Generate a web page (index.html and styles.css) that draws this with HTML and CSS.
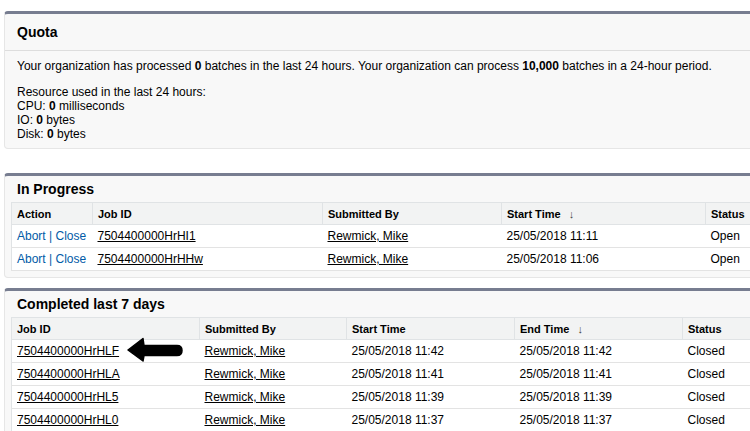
FILE: index.html
```html
<!DOCTYPE html>
<html>
<head>
<meta charset="utf-8">
<link rel="stylesheet" href="styles.css">
</head>
<body>
<div class="page">
  <section class="panel quota">
    <div class="quota-title"><h2>Quota</h2></div>
    <div class="quota-body">
      <p class="first">Your organization has processed <b>0</b> batches in the last 24 hours. Your organization can process <b>10,000</b> batches in a 24-hour period.</p>
      <p>Resource used in the last 24 hours:<br>CPU: <b>0</b> milliseconds<br>IO: <b>0</b> bytes<br>Disk: <b>0</b> bytes</p>
    </div>
  </section>

  <section class="panel progress">
    <div class="title"><h2>In Progress</h2></div>
    <table class="list">
      <colgroup><col style="width:81px"><col style="width:230px"><col style="width:179px"><col style="width:204px"><col style="width:80px"></colgroup>
      <tr class="head"><th>Action</th><th>Job ID</th><th>Submitted By</th><th>Start Time <span class="sort">&#8595;</span></th><th>Status</th></tr>
      <tr><td><a class="act">Abort</a> <span class="sep">|</span> <a class="act">Close</a></td><td><a class="u">7504400000HrHI1</a></td><td><a class="u">Rewmick, Mike</a></td><td>25/05/2018 11:11</td><td>Open</td></tr>
      <tr><td><a class="act">Abort</a> <span class="sep">|</span> <a class="act">Close</a></td><td><a class="u">7504400000HrHHw</a></td><td><a class="u">Rewmick, Mike</a></td><td>25/05/2018 11:06</td><td>Open</td></tr>
    </table>
  </section>

  <section class="panel completed">
    <div class="title"><h2>Completed last 7 days</h2></div>
    <table class="list">
      <colgroup><col style="width:188px"><col style="width:147px"><col style="width:168px"><col style="width:168px"><col style="width:100px"></colgroup>
      <tr class="head"><th>Job ID</th><th>Submitted By</th><th>Start Time</th><th>End Time <span class="sort">&#8595;</span></th><th>Status</th></tr>
      <tr><td><a class="u">7504400000HrHLF</a></td><td><a class="u">Rewmick, Mike</a></td><td>25/05/2018 11:42</td><td>25/05/2018 11:42</td><td>Closed</td></tr>
      <tr><td><a class="u">7504400000HrHLA</a></td><td><a class="u">Rewmick, Mike</a></td><td>25/05/2018 11:41</td><td>25/05/2018 11:41</td><td>Closed</td></tr>
      <tr><td><a class="u">7504400000HrHL5</a></td><td><a class="u">Rewmick, Mike</a></td><td>25/05/2018 11:39</td><td>25/05/2018 11:39</td><td>Closed</td></tr>
      <tr><td><a class="u">7504400000HrHL0</a></td><td><a class="u">Rewmick, Mike</a></td><td>25/05/2018 11:37</td><td>25/05/2018 11:37</td><td>Closed</td></tr>
    </table>
    <svg class="pointer" width="56" height="25" viewBox="0 0 56 25">
      <path d="M1,13 L16,1.5 L17,8.5 L50,8.5 Q55,8.5 55,13.5 Q55,18.5 50,18.5 L17,18.5 L16,24 Z" fill="#000" stroke="#000" stroke-width="1.5" stroke-linejoin="round"/>
    </svg>
  </section>
</div>
</body>
</html>
```

FILE: styles.css
```css
html, body {
  margin: 0;
  padding: 0;
  background: #fff;
  overflow: hidden;
}
body {
  font-family: "Liberation Sans", Arial, sans-serif;
  font-size: 12px;
  color: #222;
  width: 750px;
  height: 431px;
}
.page {
  padding: 11px 0 0 4px;
}
.panel {
  position: relative;
  width: 790px;
  background: #f8f8f8;
  border: 1px solid #e6e6e6;
  border-top: 3px solid #777d90;
  border-radius: 4px;
  box-sizing: border-box;
}
.panel h2 {
  margin: 0;
  font-size: 14px;
  font-weight: bold;
  color: #000;
  line-height: 16px;
}
.quota {
  margin-bottom: 24px;
}
.quota-title {
  padding: 10px 12px;
  border-bottom: 1px solid #dddddd;
}
.quota-body {
  padding: 8px 12px 7px;
  color: #000;
}
.quota-body p {
  margin: 0;
}
.quota-body p.first {
  margin-bottom: 12px;
}
.progress {
  margin-bottom: 10px;
}
.title {
  padding: 5px 12px;
}
.list {
  margin: 0 0 6px 6px;
  border-collapse: collapse;
  table-layout: fixed;
  background: #fff;
  border: 1px solid #e0e3e5;
  color: #000;
}
.list th {
  background: #f2f3f3;
  font-size: 11px;
  font-weight: bold;
  text-align: left;
  height: 21px;
  padding: 0 0 0 5px;
  border-bottom: 1px solid #e0e3e5;
  border-left: 1px solid #e0e3e5;
  white-space: nowrap;
}
.list td {
  height: 22px;
  padding: 0 0 0 5px;
  border-bottom: 1px solid #e3e3e3;
  white-space: nowrap;
}
.list th:first-child, .list td:first-child {
  border-left: none;
}
.sort {
  font-weight: normal;
  font-size: 11px;
  color: #444;
  margin-left: 5px;
}
a.u {
  color: #000;
  text-decoration: underline;
}
a.act {
  color: #015ba7;
  text-decoration: none;
}
.sep {
  color: #015ba7;
}
.pointer {
  position: absolute;
  left: 122px;
  top: 46px;
}
```
